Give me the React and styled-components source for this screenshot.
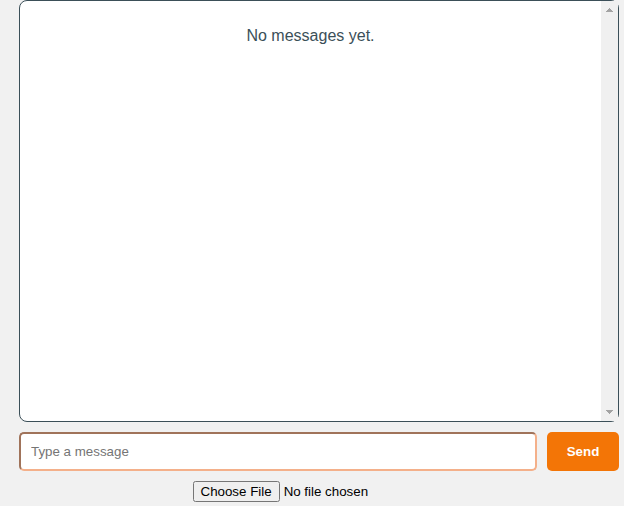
import React, { useState } from "react";
import styled, { createGlobalStyle } from "styled-components";

const GlobalStyle = createGlobalStyle`
  body {
    margin: 0;
    background: #f1f1f1;
    font-family: "Liberation Sans", Arial, sans-serif;
  }
  * {
    box-sizing: border-box;
  }
  input, button {
    font-family: "Liberation Sans", Arial, sans-serif;
  }
`;

const Chat = styled.main`
  display: flex;
  flex-direction: column;
  gap: 10px;
  padding: 0 5px 0 19px;
`;

const MessagePanel = styled.section`
  display: flex;
  height: 422px;
  background: #fff;
  border: 1px solid #3b4f58;
  border-radius: 8px;
`;

const MessageList = styled.div`
  flex: 1;
  min-width: 0;
  padding: 10px;
  overflow-y: auto;
  scrollbar-width: none;
`;

const ScrollTrack = styled.div`
  display: flex;
  flex-direction: column;
  align-items: center;
  justify-content: space-between;
  width: 17px;
  padding: 7px 0;
  background: #f0f0f0;
`;

const Arrow = styled.svg`
  display: block;
  width: 7px;
  height: 4px;
  fill: #a3a3a3;
`;

const Empty = styled.p`
  margin: 16px 0;
  color: #3b4f58;
  font-size: 16px;
  line-height: 18px;
  text-align: center;
`;

const Composer = styled.form`
  display: flex;
  gap: 10px;
`;

const MessageInput = styled.input`
  flex: 1;
  min-width: 0;
  height: 39px;
  padding: 10px;
  border: 2px inset #f4b08a;
  border-radius: 5px;
`;

const SendButton = styled.button`
  width: 72px;
  padding: 10px;
  border: 0;
  border-radius: 5px;
  background: #f37506;
  color: #fff;
  font-weight: bold;
`;

const FileInput = styled.input`
  align-self: center;
`;

export default function App() {
  const [text, setText] = useState("");
  return (
    <>
      <GlobalStyle />
      <Chat>
        <MessagePanel aria-label="Messages">
          <MessageList>
            <Empty>No messages yet.</Empty>
          </MessageList>
          <ScrollTrack aria-hidden="true">
            <Arrow viewBox="0 0 7 4">
              <path d="M0 4V3h1V2h1V1h1V0h1v1h1v1h1v1h1v1Z" />
            </Arrow>
            <Arrow viewBox="0 0 7 4">
              <path d="M0 0v1h1v1h1v1h1v1h1V3h1V2h1V1h1V0Z" />
            </Arrow>
          </ScrollTrack>
        </MessagePanel>
        <Composer onSubmit={(e) => e.preventDefault()}>
          <MessageInput
            aria-label="Message"
            placeholder="Type a message"
            value={text}
            onChange={(e) => setText(e.target.value)}
          />
          <SendButton type="submit">Send</SendButton>
        </Composer>
        <FileInput type="file" aria-label="Attachment" />
      </Chat>
    </>
  );
}
